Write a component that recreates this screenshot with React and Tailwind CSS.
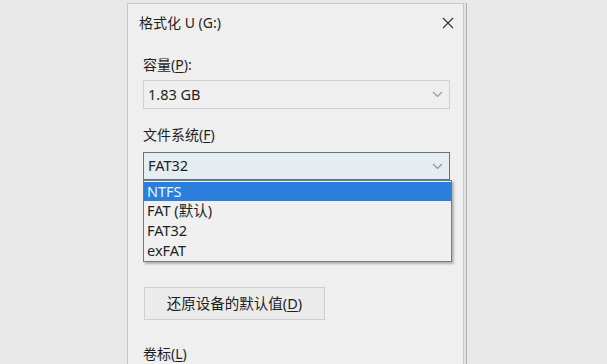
import React from "react";

function Chevron({ color = "#8a8a8a" }) {
  return (
    <svg width="11" height="7" viewBox="0 0 11 7" fill="none">
      <path d="M1 1 L5.5 5.5 L10 1" stroke={color} strokeWidth="1.2" />
    </svg>
  );
}

function U({ children }) {
  return <span className="underline underline-offset-2">{children}</span>;
}

export default function App() {
  return (
    <div className="w-[607px] h-[364px] overflow-hidden bg-[#e8e8e8] pt-[3px] pl-[127px] font-['Noto_Sans','Noto_Sans_CJK_SC',sans-serif] text-[#1e1e1e]">
      <div className="w-[337px] h-[400px] bg-[#efefef] border border-[#c8c8c8] shadow-[2px_0_0_#e2e2e2,3px_0_0_#a9b1bb] flex flex-col">
        {/* title bar */}
        <div className="h-[37px] flex items-center justify-between pl-[11px] pr-[9px] text-[14px] leading-none">
          <span>格式化 U (G:)</span>
          <svg width="12" height="12" viewBox="0 0 12 12">
            <path d="M1 1 L11 11 M11 1 L1 11" stroke="#333" strokeWidth="1.1" />
          </svg>
        </div>

        <div className="flex flex-col pl-[15px] pr-[13px]">
          <div className="text-[14px] leading-[18px] mt-[15px]">
            容量(<U>P</U>):
          </div>
          <div className="mt-[6px] h-[29px] border border-[#d0d0d0] bg-[#efefef] flex items-center justify-between pl-[4px] pr-[6px] text-[14.5px]">
            <span>1.83 GB</span>
            <Chevron color="#9a9a9a" />
          </div>

          <div className="text-[14px] leading-[18px] mt-[17px]">
            文件系统(<U>F</U>)
          </div>
          <div className="relative mt-[8px]">
            <div className="h-[28px] border border-[#5a7590] bg-[#e6edf1] flex items-center justify-between pl-[4px] pr-[6px] text-[14.5px]">
              <span>FAT32</span>
              <Chevron color="#7f96ad" />
            </div>
            <div className="absolute left-0 top-[28px] w-[309px] bg-[#f0f0f0] border border-[#6d7a87] shadow-[2px_2px_2px_rgba(0,0,0,0.25)] flex flex-col py-[1px] text-[14.5px] z-10">
              <div className="h-[19px] bg-[#2a7fdc] text-[#e8f6ff] flex items-center pl-[3px]">NTFS</div>
              <div className="h-[20px] flex items-center pl-[3px]">FAT (默认)</div>
              <div className="h-[20px] flex items-center pl-[3px]">FAT32</div>
              <div className="h-[19px] flex items-center pl-[3px]">exFAT</div>
            </div>
          </div>

          <div className="h-[107px]" />
          <div className="w-[181px] h-[33px] ml-[1px] border border-[#cfcfcf] bg-[#ebebeb] flex items-center justify-center text-[14.5px]">
            还原设备的默认值(<U>D</U>)
          </div>

          <div className="text-[14px] leading-[18px] mt-[25px]">
            卷标(<U>L</U>)
          </div>
        </div>
      </div>
    </div>
  );
}
